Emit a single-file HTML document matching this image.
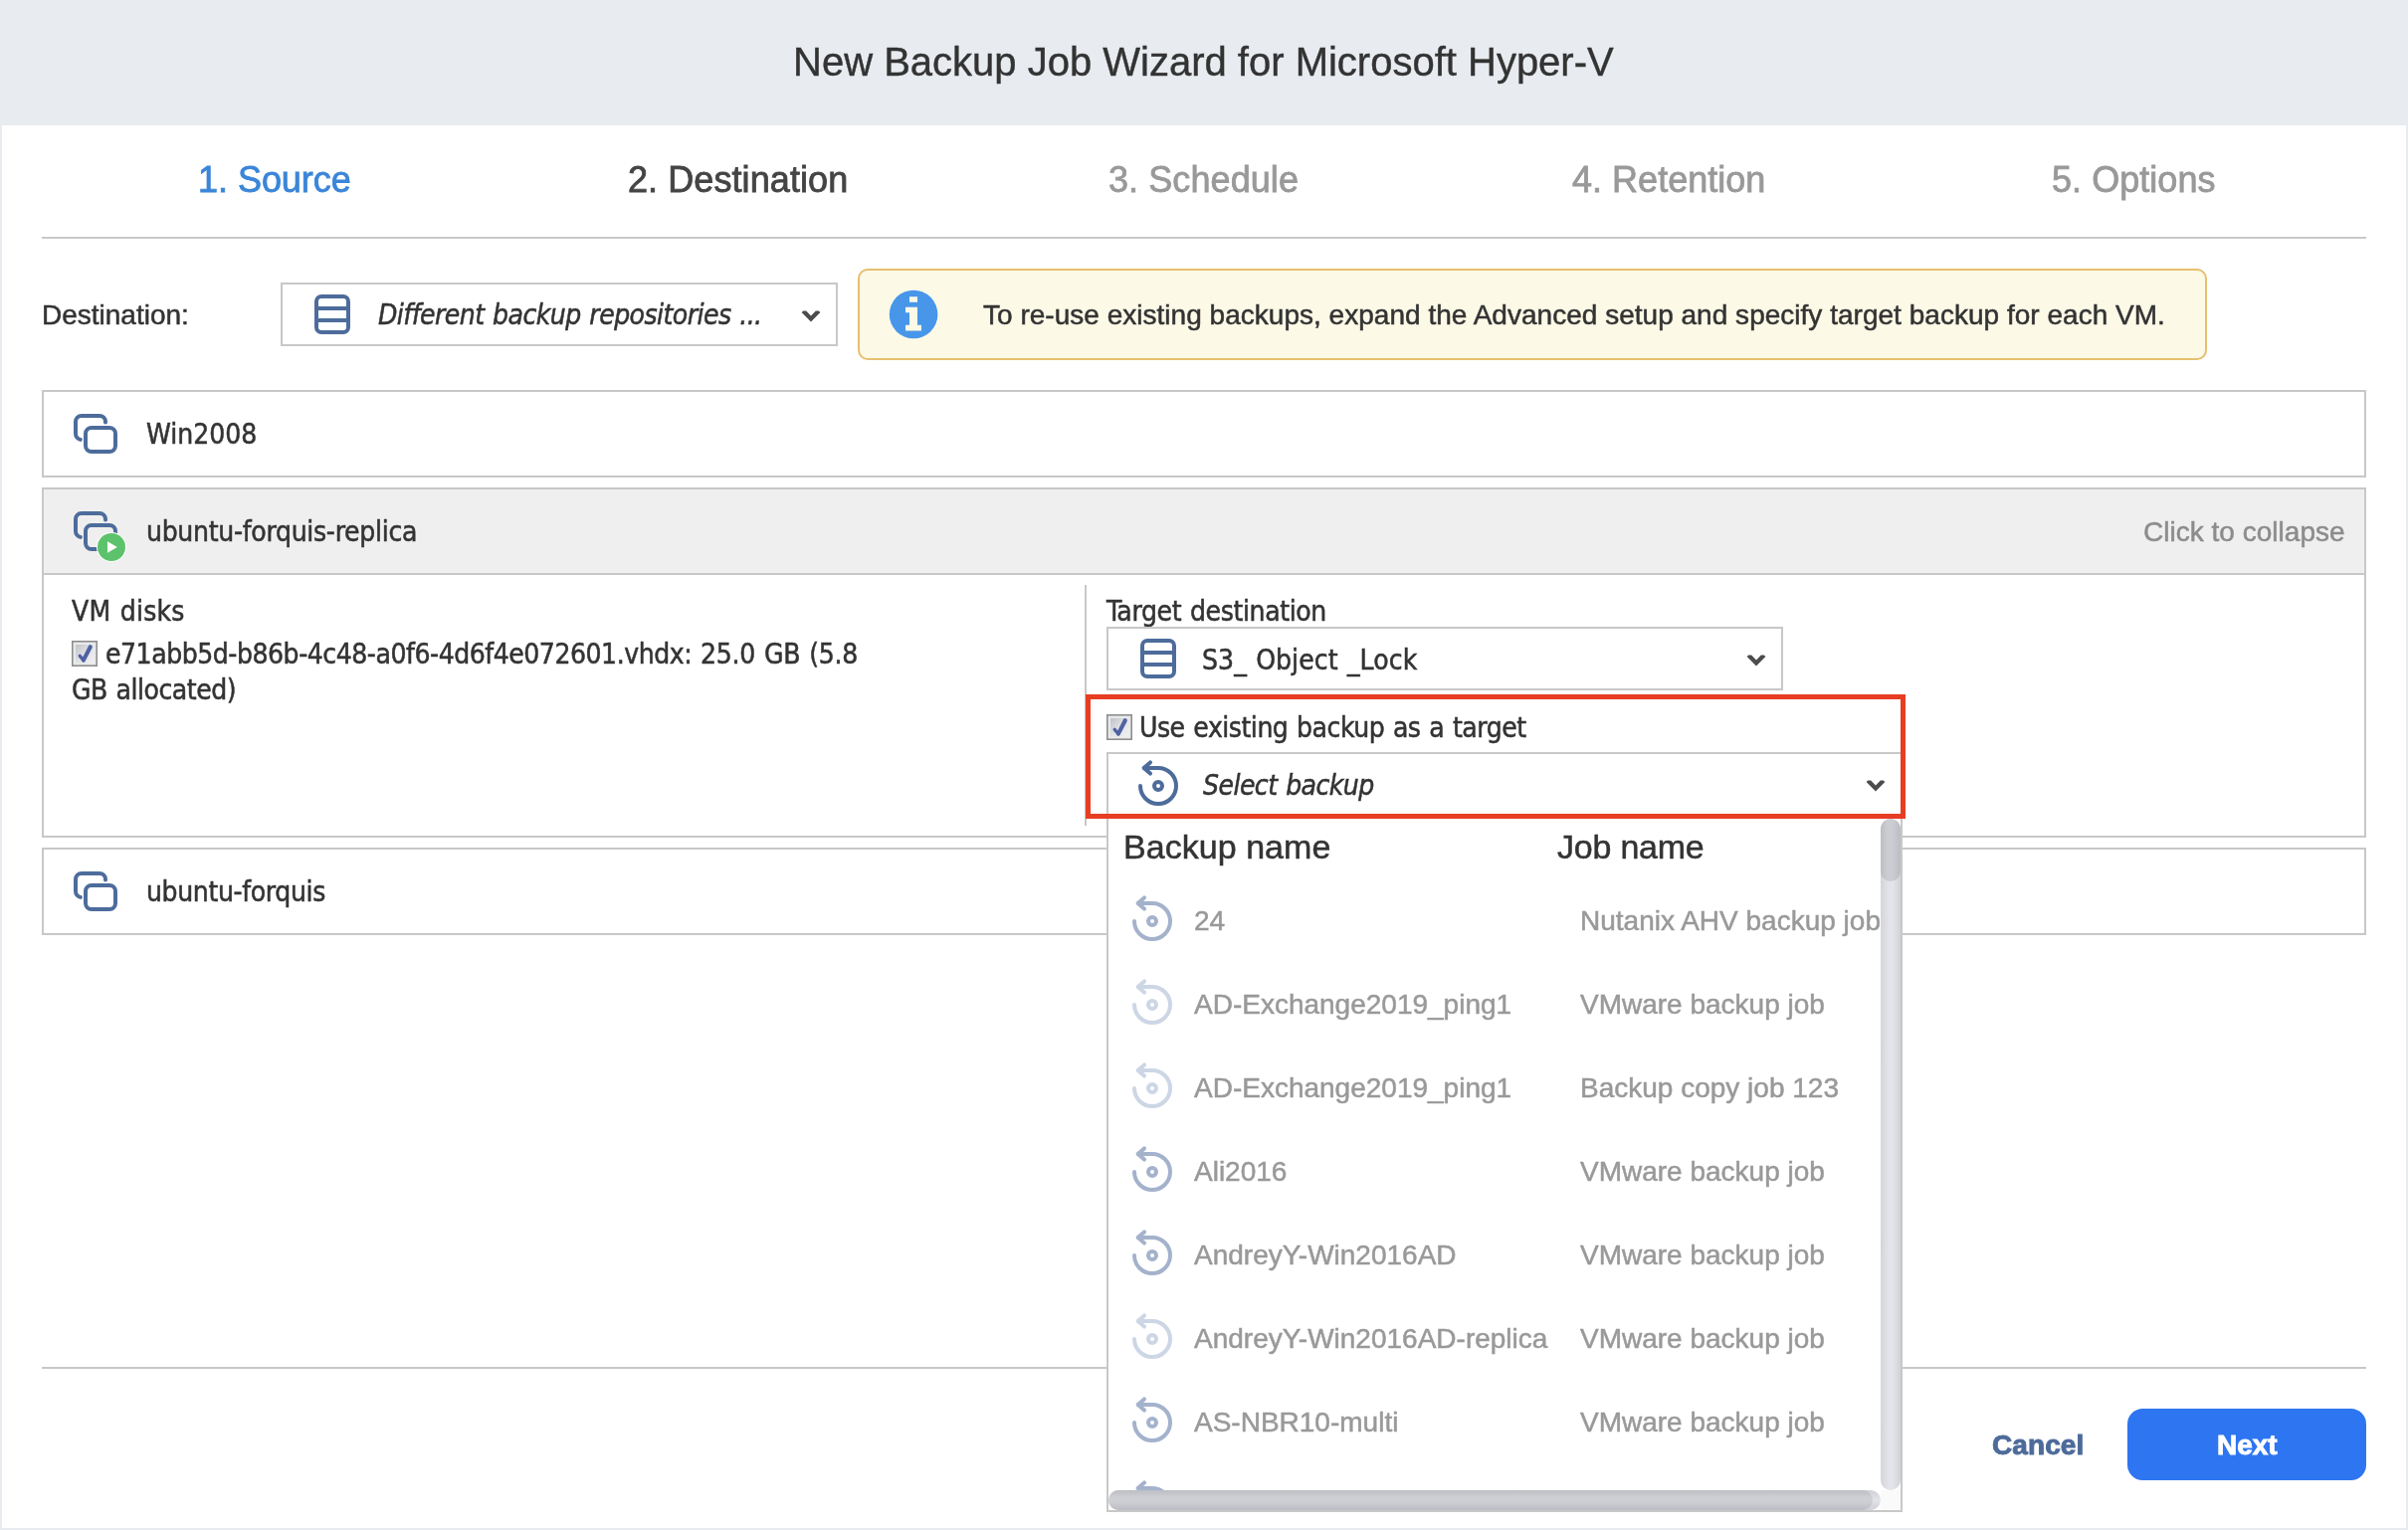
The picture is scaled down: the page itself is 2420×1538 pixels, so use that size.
<!DOCTYPE html>
<html lang="en"><head><meta charset="utf-8">
<title>New Backup Job Wizard for Microsoft Hyper-V</title>
<style>
html,body{margin:0;padding:0}
body{width:2420px;height:1538px;position:relative;overflow:hidden;background:#e8ebf0;font-family:"Liberation Sans",sans-serif}
.b{position:absolute;box-sizing:border-box;display:block}
.t{position:absolute;white-space:nowrap;line-height:1;margin:0;padding:0;will-change:transform}
.ls{font-family:"Liberation Sans",sans-serif}
.dv{font-family:"DejaVu Sans Condensed","DejaVu Sans","Liberation Sans",sans-serif}
</style></head><body>
<div class="b" style="left:0px;top:0px;width:2420px;height:126px;background:#e8ebf0"></div>
<div class="t ls" style="left:797.2px;top:42px;font-size:40px;color:#333;-webkit-text-stroke:0.4px #333;">New Backup Job Wizard for Microsoft Hyper-V</div>
<div class="b" style="left:2px;top:126px;width:2416px;height:1410px;background:#fff"></div>
<div class="t ls" style="left:198.6px;top:163px;font-size:36px;color:#3a85d8;-webkit-text-stroke:0.8px #3a85d8;letter-spacing:-0.04px;">1. Source</div>
<div class="t ls" style="left:631.4px;top:163px;font-size:36px;color:#444;-webkit-text-stroke:0.8px #444;letter-spacing:0.08px;">2. Destination</div>
<div class="t ls" style="left:1114.2px;top:163px;font-size:36px;color:#999;-webkit-text-stroke:0.8px #999;letter-spacing:0.08px;">3. Schedule</div>
<div class="t ls" style="left:1579.9px;top:163px;font-size:36px;color:#999;-webkit-text-stroke:0.8px #999;letter-spacing:0.02px;">4. Retention</div>
<div class="t ls" style="left:2062px;top:163px;font-size:36px;color:#999;-webkit-text-stroke:0.8px #999;letter-spacing:0.04px;">5. Options</div>
<div class="b" style="left:42px;top:238px;width:2336px;height:2px;background:#c9c9c9"></div>
<div class="t ls" style="left:42.2px;top:303px;font-size:28px;color:#333;-webkit-text-stroke:0.5px #333;">Destination:</div>
<div class="b" style="left:282px;top:284px;width:560px;height:64px;border:2px solid #c8c8c8;background:#fff"></div>
<svg class="b" style="left:316px;top:296px" width="36" height="40" viewBox="0 0 36 40"><g fill="none" stroke="#4d6c9b" stroke-width="4"><rect x="2" y="2" width="32" height="36" rx="5" ry="5"/><path d="M2 14H34M2 26H34"/></g></svg>
<div class="t dv" style="left:380.1px;top:303px;font-size:28px;color:#333;font-style:italic;-webkit-text-stroke:0.5px #333;letter-spacing:-0.54px;word-spacing:1.2px;">Different backup repositories ...</div>
<svg class="b" style="left:803px;top:309.7px" width="24" height="16" viewBox="0 0 24 16"><path d="M2.6 4.1L4.3 2.5H7.2L12 7.4L16.8 2.5H19.7L21.4 4.1L12 13.6Z" fill="#4c4c4c"/></svg>
<div class="b" style="left:862px;top:270px;width:1356px;height:92px;border:2px solid #e7bf6e;background:#fdf9e7;border-radius:10px"></div>
<svg class="b" style="left:893px;top:291px;overflow:visible" width="50" height="50" viewBox="-1 -1 50 50"><circle cx="24.1" cy="24" r="24.3" fill="#4796ea"/><path d="M20 6.2h8v5.5h-8zM16 16.8h12v18h4v5.6h-16v-5.6h4v-12.5h-4z" fill="#fdf9e7"/></svg>
<div class="t ls" style="left:988px;top:303px;font-size:28px;color:#333;-webkit-text-stroke:0.5px #333;letter-spacing:0.02px;">To re-use existing backups, expand the Advanced setup and specify target backup for each VM.</div>
<div class="b" style="left:42px;top:392px;width:2336px;height:88px;border:2px solid #c8c8c8;background:#fff"></div>
<svg class="b" style="left:74px;top:416px" width="56" height="52" viewBox="0 0 56 52"><g fill="none" stroke="#4d6c9b" stroke-width="4" stroke-linecap="round"><path d="M32 8.5V8A6 6 0 0 0 26 2H8A6 6 0 0 0 2 8V20A6 6 0 0 0 6.8 25.9"/><rect x="12" y="14" width="30" height="24" rx="6" ry="6"/></g></svg>
<div class="t dv" style="left:147.4px;top:423px;font-size:28px;color:#333;-webkit-text-stroke:0.5px #333;letter-spacing:-0.02px;">Win2008</div>
<div class="b" style="left:42px;top:490px;width:2336px;height:352px;border:2px solid #c8c8c8;background:#fff"></div>
<div class="b" style="left:44px;top:492px;width:2332px;height:84px;background:#efefef"></div>
<div class="b" style="left:44px;top:576px;width:2332px;height:2px;background:#c8c8c8"></div>
<svg class="b" style="left:74px;top:514px" width="56" height="52" viewBox="0 0 56 52"><g fill="none" stroke="#4d6c9b" stroke-width="4" stroke-linecap="round"><path d="M32 8.5V8A6 6 0 0 0 26 2H8A6 6 0 0 0 2 8V20A6 6 0 0 0 6.8 25.9"/><rect x="12" y="14" width="30" height="24" rx="6" ry="6"/></g><circle cx="38" cy="36" r="15" fill="#fff"/><circle cx="38" cy="36" r="14" fill="#5cc36c"/><path d="M34 30.2L43.8 36L34 41.8Z" fill="#fff"/></svg>
<div class="t dv" style="left:147.1px;top:521px;font-size:28px;color:#333;-webkit-text-stroke:0.5px #333;letter-spacing:-0.3px;">ubuntu-forquis-replica</div>
<div class="t ls" style="left:2153.6px;top:521px;font-size:28px;color:#8c8c8c;-webkit-text-stroke:0.5px #8c8c8c;letter-spacing:0.02px;">Click to collapse</div>
<div class="t dv" style="left:71.8px;top:601px;font-size:28px;color:#333;-webkit-text-stroke:0.5px #333;letter-spacing:0.2px;word-spacing:1.2px;">VM disks</div>
<svg class="b" style="left:72px;top:644px" width="26" height="26" viewBox="0 0 26 26"><defs><linearGradient id="cbg1" x1="0" y1="0" x2="1" y2="1"><stop offset="0" stop-color="#bfc2c8"/><stop offset="0.55" stop-color="#e4e5e8"/><stop offset="1" stop-color="#f0f0f0"/></linearGradient></defs><rect x="0.8" y="0.8" width="24.4" height="24.4" fill="#e9eaeb" stroke="#8e8e8e" stroke-width="1.6"/><rect x="4" y="4" width="18.6" height="18.6" fill="url(#cbg1)"/><g fill="none" stroke="#4f62a1" stroke-linecap="round" stroke-linejoin="round"><path d="M8.2 15.3L11.9 19.6" stroke-width="3.3"/><path d="M11.9 19.6L18.8 6.2" stroke-width="4.1"/></g></svg>
<div class="t dv" style="left:106px;top:644px;font-size:28px;color:#333;-webkit-text-stroke:0.5px #333;letter-spacing:-0.46px;">e71abb5d-b86b-4c48-a0f6-4d6f4e072601.vhdx:</div>
<div class="t dv" style="left:703.9px;top:644px;font-size:28px;color:#333;-webkit-text-stroke:0.5px #333;letter-spacing:-0.26px;word-spacing:1.2px;">25.0 GB (5.8</div>
<div class="t dv" style="left:72px;top:680px;font-size:28px;color:#333;-webkit-text-stroke:0.5px #333;letter-spacing:-0.48px;word-spacing:1.2px;">GB allocated)</div>
<div class="b" style="left:1090px;top:588px;width:2px;height:242px;background:#c8c8c8"></div>
<div class="t dv" style="left:1112.4px;top:601px;font-size:28px;color:#333;-webkit-text-stroke:0.5px #333;letter-spacing:-0.38px;word-spacing:1.2px;">Target destination</div>
<div class="b" style="left:1112px;top:630px;width:680px;height:64px;border:2px solid #c8c8c8;background:#fff"></div>
<svg class="b" style="left:1146px;top:642px" width="36" height="40" viewBox="0 0 36 40"><g fill="none" stroke="#4d6c9b" stroke-width="4"><rect x="2" y="2" width="32" height="36" rx="5" ry="5"/><path d="M2 14H34M2 26H34"/></g></svg>
<div class="t dv" style="left:1207.5px;top:650px;font-size:28px;color:#333;-webkit-text-stroke:0.5px #333;letter-spacing:0.08px;word-spacing:1.2px;">S3_ Object _Lock</div>
<svg class="b" style="left:1753px;top:655.7px" width="24" height="16" viewBox="0 0 24 16"><path d="M2.6 4.1L4.3 2.5H7.2L12 7.4L16.8 2.5H19.7L21.4 4.1L12 13.6Z" fill="#4c4c4c"/></svg>
<div class="b" style="left:42px;top:852px;width:2336px;height:88px;border:2px solid #c8c8c8;background:#fff"></div>
<svg class="b" style="left:74px;top:876px" width="56" height="52" viewBox="0 0 56 52"><g fill="none" stroke="#4d6c9b" stroke-width="4" stroke-linecap="round"><path d="M32 8.5V8A6 6 0 0 0 26 2H8A6 6 0 0 0 2 8V20A6 6 0 0 0 6.8 25.9"/><rect x="12" y="14" width="30" height="24" rx="6" ry="6"/></g></svg>
<div class="t dv" style="left:147.1px;top:883px;font-size:28px;color:#333;-webkit-text-stroke:0.5px #333;letter-spacing:-0.36px;">ubuntu-forquis</div>
<div class="b" style="left:42px;top:1374px;width:2336px;height:2px;background:#c8c8c8"></div>
<div class="t ls" style="left:2002.2px;top:1439px;font-size:28px;color:#4d6b9a;font-weight:bold;-webkit-text-stroke:0.9px #4d6b9a;letter-spacing:0.1px;">Cancel</div>
<div class="b" style="left:2138px;top:1416px;width:240px;height:72px;background:#2e75f1;border-radius:15.5px"></div>
<div class="t ls" style="left:2227.6px;top:1439px;font-size:28px;color:#fff;font-weight:bold;-webkit-text-stroke:0.9px #fff;letter-spacing:-0.06px;">Next</div>
<div class="b" style="left:1112px;top:756px;width:800px;height:764px;border:2px solid #c8c8c8;background:#fff"></div>
<div class="b" style="left:1890px;top:1498px;width:20px;height:20px;background:#fafafa"></div>
<div class="b" style="left:1114px;top:823px;width:776px;height:675px;overflow:hidden">
<div class="t ls" style="left:14.9px;top:11px;font-size:34px;color:#333;-webkit-text-stroke:0.5px #333;letter-spacing:0.04px;">Backup name</div>
<div class="t ls" style="left:451.3px;top:11px;font-size:34px;color:#333;-webkit-text-stroke:0.5px #333;letter-spacing:-0.22px;">Job name</div>
<svg class="b" style="left:22px;top:75px" width="44" height="50" viewBox="0 0 44 50"><g fill="none" stroke="#a4b2cc" stroke-width="4" stroke-linecap="round" stroke-linejoin="round"><path d="M8 10H22A18 18 0 1 1 4 28"/><path d="M14 4.4L7.6 10L14 15.6"/><circle cx="22" cy="28" r="4"/></g></svg>
<div class="t ls" style="left:85.5px;top:89px;font-size:28px;color:#999;-webkit-text-stroke:0.5px #999;">24</div>
<div class="t ls" style="left:473.8px;top:89px;font-size:28px;color:#999;-webkit-text-stroke:0.5px #999;">Nutanix AHV backup job</div>
<svg class="b" style="left:22px;top:159px" width="44" height="50" viewBox="0 0 44 50"><g fill="none" stroke="#cdd6e5" stroke-width="4" stroke-linecap="round" stroke-linejoin="round"><path d="M8 10H22A18 18 0 1 1 4 28"/><path d="M14 4.4L7.6 10L14 15.6"/><circle cx="22" cy="28" r="4"/></g></svg>
<div class="t ls" style="left:86.2px;top:173px;font-size:28px;color:#999;-webkit-text-stroke:0.5px #999;">AD-Exchange2019_ping1</div>
<div class="t ls" style="left:474.2px;top:173px;font-size:28px;color:#999;-webkit-text-stroke:0.5px #999;">VMware backup job</div>
<svg class="b" style="left:22px;top:243px" width="44" height="50" viewBox="0 0 44 50"><g fill="none" stroke="#cdd6e5" stroke-width="4" stroke-linecap="round" stroke-linejoin="round"><path d="M8 10H22A18 18 0 1 1 4 28"/><path d="M14 4.4L7.6 10L14 15.6"/><circle cx="22" cy="28" r="4"/></g></svg>
<div class="t ls" style="left:86.2px;top:257px;font-size:28px;color:#999;-webkit-text-stroke:0.5px #999;">AD-Exchange2019_ping1</div>
<div class="t ls" style="left:473.5px;top:257px;font-size:28px;color:#999;-webkit-text-stroke:0.5px #999;">Backup copy job 123</div>
<svg class="b" style="left:22px;top:327px" width="44" height="50" viewBox="0 0 44 50"><g fill="none" stroke="#a4b2cc" stroke-width="4" stroke-linecap="round" stroke-linejoin="round"><path d="M8 10H22A18 18 0 1 1 4 28"/><path d="M14 4.4L7.6 10L14 15.6"/><circle cx="22" cy="28" r="4"/></g></svg>
<div class="t ls" style="left:86.2px;top:341px;font-size:28px;color:#999;-webkit-text-stroke:0.5px #999;">Ali2016</div>
<div class="t ls" style="left:474.2px;top:341px;font-size:28px;color:#999;-webkit-text-stroke:0.5px #999;">VMware backup job</div>
<svg class="b" style="left:22px;top:411px" width="44" height="50" viewBox="0 0 44 50"><g fill="none" stroke="#a4b2cc" stroke-width="4" stroke-linecap="round" stroke-linejoin="round"><path d="M8 10H22A18 18 0 1 1 4 28"/><path d="M14 4.4L7.6 10L14 15.6"/><circle cx="22" cy="28" r="4"/></g></svg>
<div class="t ls" style="left:86.2px;top:425px;font-size:28px;color:#999;-webkit-text-stroke:0.5px #999;">AndreyY-Win2016AD</div>
<div class="t ls" style="left:474.2px;top:425px;font-size:28px;color:#999;-webkit-text-stroke:0.5px #999;">VMware backup job</div>
<svg class="b" style="left:22px;top:495px" width="44" height="50" viewBox="0 0 44 50"><g fill="none" stroke="#cdd6e5" stroke-width="4" stroke-linecap="round" stroke-linejoin="round"><path d="M8 10H22A18 18 0 1 1 4 28"/><path d="M14 4.4L7.6 10L14 15.6"/><circle cx="22" cy="28" r="4"/></g></svg>
<div class="t ls" style="left:86.2px;top:509px;font-size:28px;color:#999;-webkit-text-stroke:0.5px #999;">AndreyY-Win2016AD-replica</div>
<div class="t ls" style="left:474.2px;top:509px;font-size:28px;color:#999;-webkit-text-stroke:0.5px #999;">VMware backup job</div>
<svg class="b" style="left:22px;top:579px" width="44" height="50" viewBox="0 0 44 50"><g fill="none" stroke="#a4b2cc" stroke-width="4" stroke-linecap="round" stroke-linejoin="round"><path d="M8 10H22A18 18 0 1 1 4 28"/><path d="M14 4.4L7.6 10L14 15.6"/><circle cx="22" cy="28" r="4"/></g></svg>
<div class="t ls" style="left:86.2px;top:593px;font-size:28px;color:#999;-webkit-text-stroke:0.5px #999;">AS-NBR10-multi</div>
<div class="t ls" style="left:474.2px;top:593px;font-size:28px;color:#999;-webkit-text-stroke:0.5px #999;">VMware backup job</div>
<svg class="b" style="left:22px;top:663px" width="44" height="50" viewBox="0 0 44 50"><g fill="none" stroke="#a4b2cc" stroke-width="4" stroke-linecap="round" stroke-linejoin="round"><path d="M8 10H22A18 18 0 1 1 4 28"/><path d="M14 4.4L7.6 10L14 15.6"/><circle cx="22" cy="28" r="4"/></g></svg>
<div class="t ls" style="left:86.2px;top:677px;font-size:28px;color:#999;-webkit-text-stroke:0.5px #999;">AS-NBR10-multi-replica</div>
<div class="t ls" style="left:474.2px;top:677px;font-size:28px;color:#999;-webkit-text-stroke:0.5px #999;">VMware backup job</div>
</div>
<div class="b" style="left:1890px;top:823px;width:20px;height:675px;border-radius:10px;background:linear-gradient(90deg,#d3d5da 0,#e3e5ea 45%,#e3e5ea 60%,#d0d2d7 100%)"></div>
<div class="b" style="left:1890px;top:823px;width:20px;height:63px;border-radius:10px;background:linear-gradient(90deg,#bcbec3 0,#cbcdd2 35%,#cbcdd2 60%,#bbbdc2 100%)"></div>
<div class="b" style="left:1114px;top:1498px;width:776px;height:20px;border-radius:10px;background:linear-gradient(180deg,#cfd1d7 0,#e1e3e8 50%,#cfd1d7 100%)"></div>
<div class="b" style="left:1114px;top:1498px;width:768px;height:20px;border-radius:10px;background:linear-gradient(180deg,#bcbec3 0,#cdcfd4 35%,#cdcfd4 60%,#bbbdc2 100%)"></div>
<svg class="b" style="left:1142px;top:762px" width="44" height="50" viewBox="0 0 44 50"><g fill="none" stroke="#4d6c9b" stroke-width="4" stroke-linecap="round" stroke-linejoin="round"><path d="M8 10H22A18 18 0 1 1 4 28"/><path d="M14 4.4L7.6 10L14 15.6"/><circle cx="22" cy="28" r="4"/></g></svg>
<div class="t dv" style="left:1209.3px;top:776px;font-size:28px;color:#333;font-style:italic;-webkit-text-stroke:0.5px #333;letter-spacing:-0.54px;word-spacing:1.2px;">Select backup</div>
<svg class="b" style="left:1873px;top:781.5px" width="24" height="16" viewBox="0 0 24 16"><path d="M2.6 4.1L4.3 2.5H7.2L12 7.4L16.8 2.5H19.7L21.4 4.1L12 13.6Z" fill="#4c4c4c"/></svg>
<svg class="b" style="left:1112px;top:718px" width="26" height="26" viewBox="0 0 26 26"><defs><linearGradient id="cbg2" x1="0" y1="0" x2="1" y2="1"><stop offset="0" stop-color="#bfc2c8"/><stop offset="0.55" stop-color="#e4e5e8"/><stop offset="1" stop-color="#f0f0f0"/></linearGradient></defs><rect x="0.8" y="0.8" width="24.4" height="24.4" fill="#e9eaeb" stroke="#8e8e8e" stroke-width="1.6"/><rect x="4" y="4" width="18.6" height="18.6" fill="url(#cbg2)"/><g fill="none" stroke="#4f62a1" stroke-linecap="round" stroke-linejoin="round"><path d="M8.2 15.3L11.9 19.6" stroke-width="3.3"/><path d="M11.9 19.6L18.8 6.2" stroke-width="4.1"/></g></svg>
<div class="t dv" style="left:1145.2px;top:718px;font-size:28px;color:#333;-webkit-text-stroke:0.5px #333;letter-spacing:-0.48px;word-spacing:1.2px;">Use existing backup as a target</div>
<div class="b" style="left:1091px;top:698px;width:824px;height:125px;border:5px solid #e73d23"></div>
</body></html>
